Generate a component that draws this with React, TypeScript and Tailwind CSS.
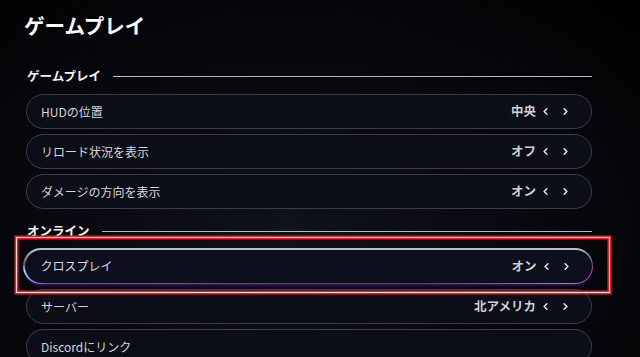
import React from 'react';
import { ChevronLeft, ChevronRight } from 'lucide-react';

interface RowProps {
    label: string;
    value?: string;
}

const Arrows: React.FC<{ value: string }> = ({ value }) => (
    <div className="flex items-center text-[12.5px] font-bold text-[#cfcfd4]">
        <span>{value}</span>
        <ChevronLeft size={11} strokeWidth={3.2} className="ml-[4px] text-[#ececf0]" />
        <ChevronRight size={11} strokeWidth={3.2} className="ml-[9px] text-[#ececf0]" />
    </div>
);

const Row: React.FC<RowProps> = ({ label, value }) => (
    <div className="h-[35px] rounded-[18px] border border-[#3b3e4a] bg-[#0b0d17] flex items-center justify-between pl-[14px] pr-[20px]">
        <span className="text-[12px] text-[#d6d6da]">{label}</span>
        {value && <Arrows value={value} />}
    </div>
);

const FocusedRow: React.FC<RowProps> = ({ label, value }) => (
    <div className="relative">
        <div className="absolute -left-[10px] -right-[18px] -top-[12px] -bottom-[9px] border border-[#ffd6d6] shadow-[0_0_0_1.5px_#e3232e,inset_0_0_0_1.5px_#e3232e] pointer-events-none z-10" />
        <div className="-ml-[3px] -mr-[1px] -mt-[1px] h-[36px] rounded-[19px] p-[1.5px] bg-[linear-gradient(to_bottom,#c4c4cc_0%,#5a5b66_45%,transparent_62%),linear-gradient(to_right,#8ee8ff_0%,#b020ff_4%,#9a28f0_25%,#5a36a8_50%,#4a4b58_70%,#8a8c98_96%,#e040c0_100%)] shadow-[0_2px_3px_-1px_rgba(150,40,240,0.45)]">
            <div className="h-full rounded-[18px] bg-[#0d0f1c] flex items-center justify-between pl-[16px] pr-[20px]">
                <span className="text-[12px] text-[#dcdce0]">{label}</span>
                {value && <Arrows value={value} />}
            </div>
        </div>
    </div>
);

const SectionHeader: React.FC<{ title: string }> = ({ title }) => (
    <div className="h-[20px] flex items-center pl-[1px]">
        <span className="text-[12.5px] font-bold text-[#f2f2f4] whitespace-nowrap">{title}</span>
        <div className="ml-[12px] flex-1 h-px bg-[#b8b8be]" />
    </div>
);

export default function App() {
    return (
        <div
            className="w-[640px] h-[357px] overflow-hidden bg-[radial-gradient(ellipse_at_45%_65%,#10121c_0%,#07080d_55%,#000000_100%)]"
            style={{ fontFamily: '"Noto Sans CJK JP", "Noto Sans", sans-serif' }}
        >
            <div className="pl-[26px] pr-[48px]">
                <h1 className="-ml-[2px] pt-[11px] h-[39px] leading-[28px] text-[20.5px] font-bold text-white">
                    ゲームプレイ
                </h1>
                <div className="mt-[27px]">
                    <SectionHeader title="ゲームプレイ" />
                </div>
                <div className="mt-[8px] flex flex-col gap-[5px]">
                    <Row label="HUDの位置" value="中央" />
                    <Row label="リロード状況を表示" value="オフ" />
                    <Row label="ダメージの方向を表示" value="オン" />
                </div>
                <div className="mt-[12px]">
                    <SectionHeader title="オンライン" />
                </div>
                <div className="mt-[8px] flex flex-col gap-[5px]">
                    <FocusedRow label="クロスプレイ" value="オン" />
                    <Row label="サーバー" value="北アメリカ" />
                    <Row label="Discordにリンク" />
                </div>
            </div>
        </div>
    );
}
